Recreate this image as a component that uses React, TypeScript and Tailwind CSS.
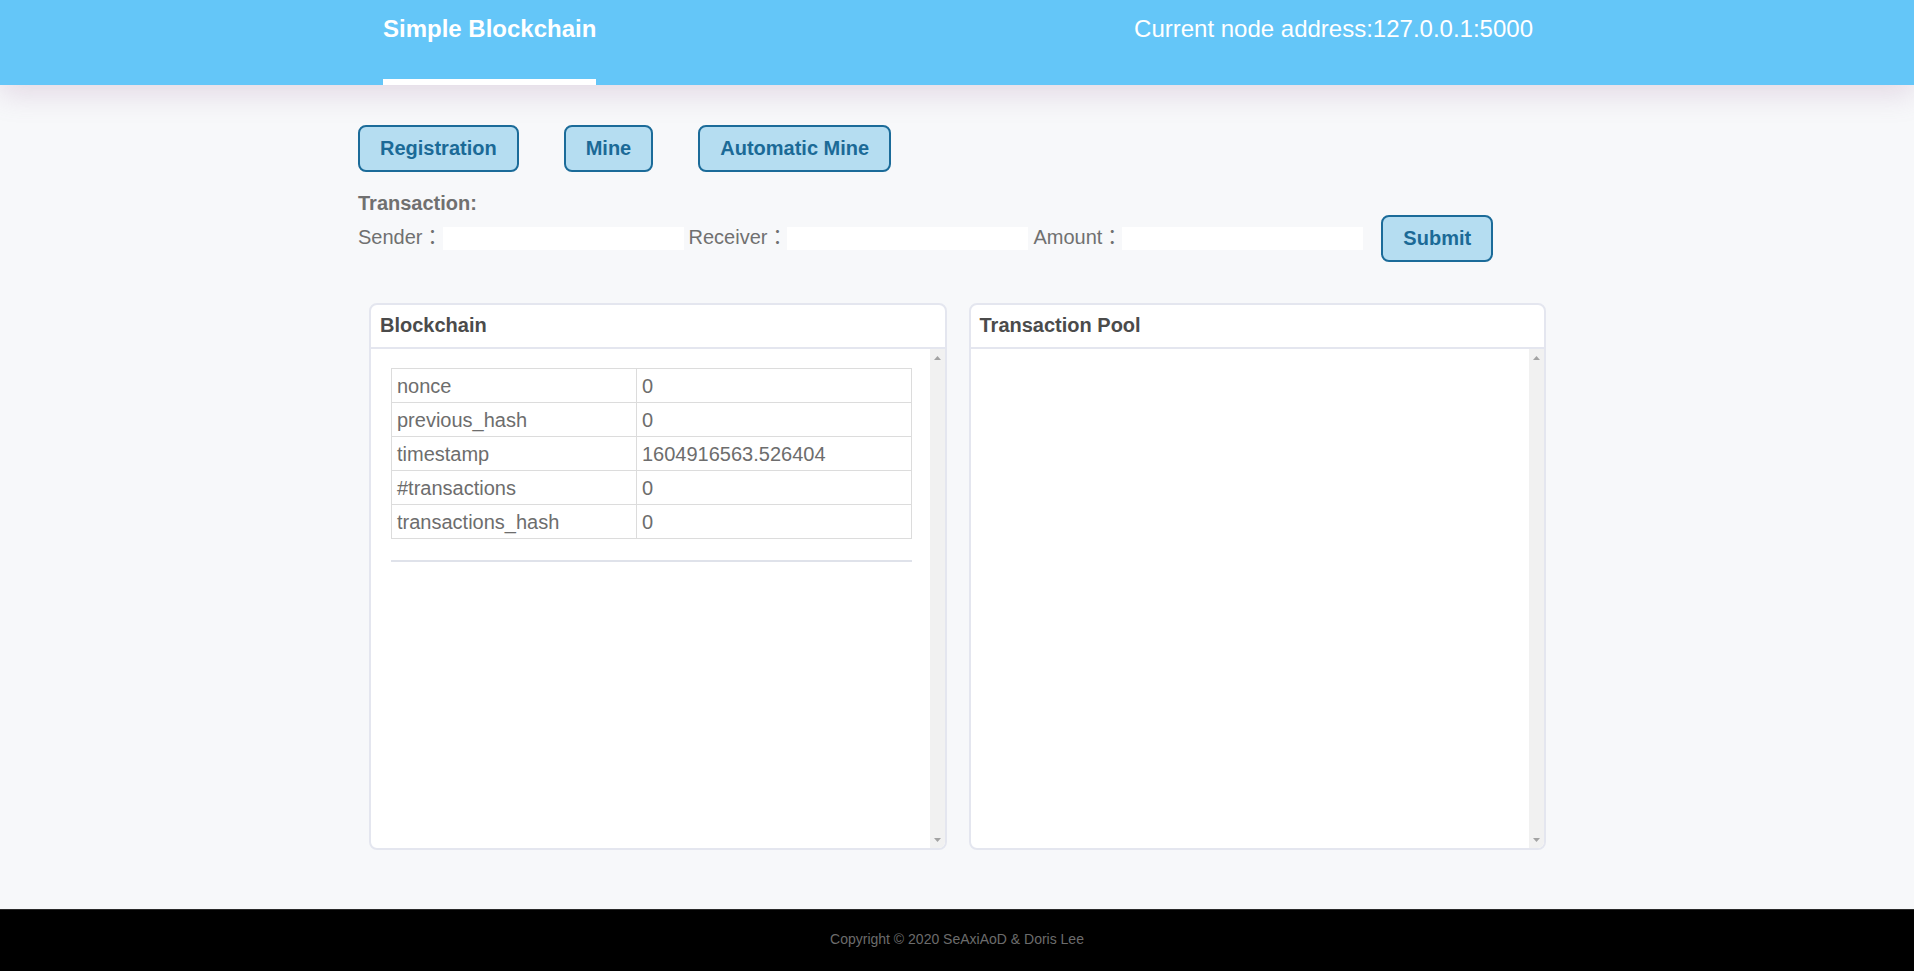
import React from 'react';

const font = { fontFamily: '"Liberation Sans", Arial, "Noto Sans CJK TC", sans-serif' };

const blockFields: [string, string][] = [
  ['nonce', '0'],
  ['previous_hash', '0'],
  ['timestamp', '1604916563.526404'],
  ['#transactions', '0'],
  ['transactions_hash', '0'],
];

function ActionButton({ label }: { label: string }) {
  return (
    <button className="h-[47px] px-5 pb-[2px] rounded-lg border-2 border-[#1b6b99] bg-[#b5ddf1] text-[20px] font-bold text-[#1b6a97] leading-none">
      {label}
    </button>
  );
}

function Field({ label, first }: { label: string; first?: boolean }) {
  return (
    <div className={first ? 'flex items-center' : 'flex items-center ml-[5px]'}>
      <span className="text-[20px] leading-[24px] text-[#707070] mb-[3px]">{label}</span>
      <span
        className="w-[20px] text-[20px] leading-[28px] text-[#707070] text-center mb-[4px]"
        style={{ fontFamily: '"Noto Sans CJK TC", sans-serif' }}
      >
        ：
      </span>
      <input type="text" className="w-[241px] h-[23px] bg-white outline-none" />
    </div>
  );
}

function ScrollTrack() {
  return (
    <div className="w-[15px] shrink-0 bg-[#f1f1f1] flex flex-col items-center justify-between pt-[7px] pb-[6px]">
      <svg width="7" height="4" viewBox="0 0 7 4">
        <polygon points="3.5,0 7,4 0,4" fill="#a3a3a3" />
      </svg>
      <svg width="7" height="4" viewBox="0 0 7 4">
        <polygon points="0,0 7,0 3.5,4" fill="#a3a3a3" />
      </svg>
    </div>
  );
}

function Panel({ title, children }: { title: string; children?: React.ReactNode }) {
  return (
    <div className="bg-white rounded-lg border-2 border-[#e4e6ef] overflow-hidden">
      <div className="h-[44px] flex items-center px-[9px] pb-[2px] border-b-2 border-[#e4e6ef]">
        <h2 className="text-[20px] font-bold text-[#4b4b4b]">{title}</h2>
      </div>
      <div className="h-[499px] flex">
        <div className="flex-1 px-5 pt-[19px] overflow-hidden">{children}</div>
        <ScrollTrack />
      </div>
    </div>
  );
}

export default function App() {
  return (
    <div className="min-h-screen flex flex-col bg-[#f7f8fa]" style={font}>
      {/* Header */}
      <header className="h-[85px] bg-[#64c6f8] shadow-[0_10px_28px_rgba(160,115,160,0.22)] relative z-10">
        <div className="w-[1152px] pl-[2px] mx-auto h-full flex justify-between">
          <div className="h-full border-b-[6px] border-white pt-[15px]">
            <h1 className="text-[24px] leading-[28px] font-bold text-white">Simple Blockchain</h1>
          </div>
          <div className="pt-[15px] text-[24px] leading-[28px] text-white">
            Current node address:127.0.0.1:5000
          </div>
        </div>
      </header>

      <main className="w-[1198px] mx-auto pt-10 pb-[59px]">
        <div className="flex gap-[45px]">
          <ActionButton label="Registration" />
          <ActionButton label="Mine" />
          <ActionButton label="Automatic Mine" />
        </div>

        <div className="mt-[19px] text-[20px] leading-[24px] font-bold text-[#707070]">Transaction:</div>
        <div className="flex items-center h-[47px]">
          <Field label="Sender" first />
          <Field label="Receiver" />
          <Field label="Amount" />
          <div className="ml-[18px]">
            <ActionButton label="Submit" />
          </div>
        </div>

        <div className="mt-[41px] ml-[11px] w-[1177px] grid grid-cols-2 gap-[22px]">
          <Panel title="Blockchain">
            <table className="w-[521px] border-collapse text-[20px] text-[#6d6d6d]">
              <tbody>
                {blockFields.map(([k, v]) => (
                  <tr key={k} className="h-[34px]">
                    <td className="w-[245px] border border-[#dcdcdc] px-[5px]">{k}</td>
                    <td className="border border-[#dcdcdc] px-[5px]">{v}</td>
                  </tr>
                ))}
              </tbody>
            </table>
            <hr className="mt-[21px] w-[521px] border-t-2 border-[#dfe2ea]" />
          </Panel>
          <Panel title="Transaction Pool" />
        </div>
      </main>

      <footer className="mt-auto h-[62px] bg-black border-t border-[#2a2a2a] flex items-center justify-center">
        <p className="text-[14px] text-[#6c6c6c] -mt-[3px]">Copyright © 2020 SeAxiAoD &amp; Doris Lee</p>
      </footer>
    </div>
  );
}
